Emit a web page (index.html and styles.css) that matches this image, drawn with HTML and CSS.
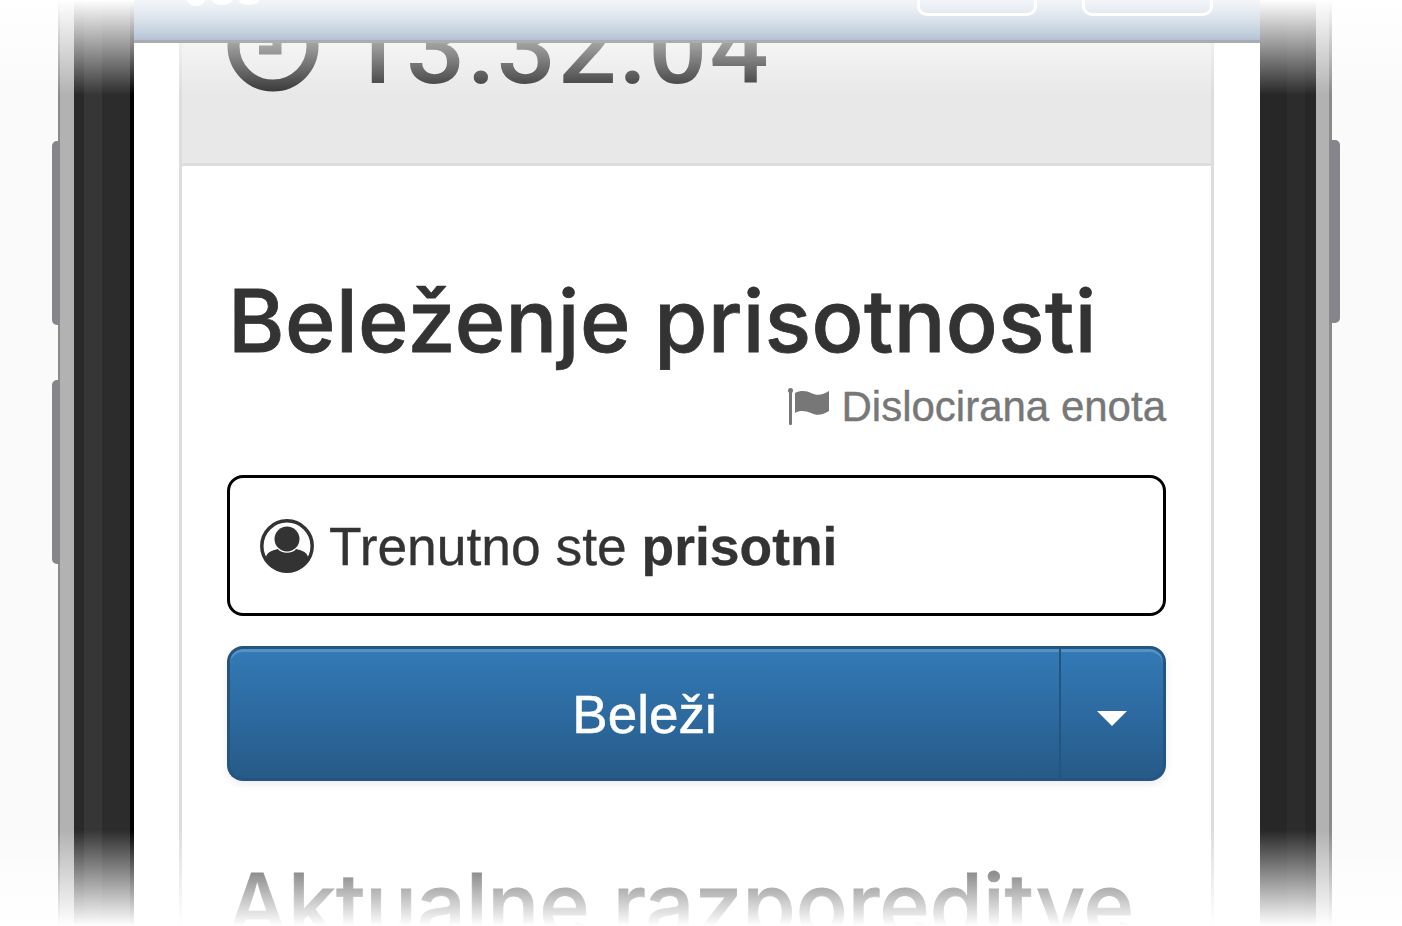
FILE: index.html
```html
<!DOCTYPE html>
<html>
<head>
  <meta name="viewport" content="width=device-width, initial-scale=1.0">
  <link rel="stylesheet" href="styles.css">
</head>
<body>
  <div class="stage">
    <!-- Phone side buttons -->
    <span class="side-key key-left-1"></span>
    <span class="side-key key-left-2"></span>
    <span class="side-key key-right"></span>

    <div class="phone">
      <div class="bezel bezel-left"><i></i><i></i><i></i><i></i><i></i></div>

      <div class="screen">
        <div class="navbar">
          <svg class="brand" width="90" height="8" viewBox="0 0 90 8">
            <ellipse cx="11" cy="0" rx="9" ry="6"></ellipse>
            <ellipse cx="37" cy="0" rx="10" ry="5"></ellipse>
            <ellipse cx="64" cy="0" rx="10" ry="5"></ellipse>
          </svg>
          <span class="nav-btn nav-btn-a"></span>
          <span class="nav-btn nav-btn-b"></span>
        </div>

        <div class="panel">
          <div class="clock-bar">
            <svg class="clock-icon" width="92" height="92" viewBox="0 0 92 92">
              <circle cx="46" cy="46" r="39.5"></circle>
              <path d="M32 50 H50 V24"></path>
            </svg>
            <span class="clock-time">13:32:04</span>
          </div>

          <div class="panel-body">
            <h1 class="title">Beleženje prisotnosti</h1>
            <div class="location">
              <svg width="42" height="38" viewBox="0 0 42 38">
                <rect x="1" y="4" width="3" height="34" rx="1"></rect>
                <circle cx="2.5" cy="3.5" r="2.5"></circle>
                <path d="M7 6 C13 3 19 4 23 6 C29 9 35 8 41 4 V24 C35 28 29 29 23 26 C18 24 12 23 7 26 Z"></path>
              </svg>
              <span>Dislocirana enota</span>
            </div>

            <div class="status">
              <svg width="54" height="54" viewBox="0 0 54 54">
                <circle class="ring" cx="27" cy="27" r="25.2"></circle>
                <circle cx="27" cy="20" r="12.5"></circle>
                <path d="M6 43 V38 C7 33 13 31 18 30 C21 35 33 35 36 30 C41 31 47 33 48 38 V43 A26 26 0 0 1 6 43 Z"></path>
              </svg>
              <span>Trenutno ste <b>prisotni</b></span>
            </div>

            <div class="action">
              <button class="action-main">Beleži</button>
              <button class="action-caret"><i></i></button>
            </div>

            <h2 class="subtitle">Aktualne razporeditve</h2>
          </div>
        </div>
      </div>

      <div class="bezel bezel-right"><i></i><i></i><i></i><i></i></div>
    </div>

    <!-- Fade at top and bottom -->
    <div class="fade fade-top"></div>
    <div class="fade fade-bottom"></div>
    <div class="nav-top"></div>
  </div>
</body>
</html>
```

FILE: styles.css
```css
body {
  margin: 0;
  background: #fff;
  font-family: "Liberation Sans", Arial, sans-serif;
  color: #333;
}

.stage {
  position: relative;
  width: 1402px;
  height: 926px;
  overflow: hidden;
  background: #fafafa;
}

.side-key {
  position: absolute;
  background: #85858b;
  border-radius: 5px 0 0 5px;
}

.key-left-1 {
  left: 52px;
  top: 141px;
  width: 8px;
  height: 184px;
}

.key-left-2 {
  left: 52px;
  top: 380px;
  width: 8px;
  height: 184px;
}

.key-right {
  left: 1330px;
  top: 140px;
  width: 10px;
  height: 183px;
  border-radius: 0 5px 5px 0;
}

.phone {
  display: flex;
  height: 926px;
  padding-left: 58px;
}

.bezel {
  display: flex;
  flex: none;
}

.bezel i {
  display: block;
  height: 100%;
}

.bezel-left i:nth-child(1) { width: 2px; background: #8a8a8a; }
.bezel-left i:nth-child(2) { width: 14px; background: #b2b2b2; }
.bezel-left i:nth-child(3) { width: 10px; background: #2a2a2a; }
.bezel-left i:nth-child(4) { width: 18px; background: #363636; }
.bezel-left i:nth-child(5) { width: 32px; background: linear-gradient(90deg, #2c2c2c 28px, #000 28px); }

.bezel-right i:nth-child(1) { width: 56px; background: linear-gradient(90deg, #272727 27px, #2c2c2c 27px, #2c2c2c 45px, #272727 45px); }
.bezel-right i:nth-child(2) { width: 13px; background: #b2b2b2; }
.bezel-right i:nth-child(3) { width: 3px; background: #8a8a8a; }
.bezel-right i:nth-child(4) { width: 0; }

.screen {
  position: relative;
  flex: none;
  width: 1126px;
  background: #fff;
  padding: 0 46px 0 45px;
  box-sizing: border-box;
}

.navbar {
  position: absolute;
  z-index: 5;
  top: 0;
  left: 0;
  right: 0;
  height: 40px;
  border-bottom: 3px solid #a9acb0;
  background: linear-gradient(#dfe7ef, #b3c3d4);
}

.brand {
  position: absolute;
  left: 51px;
  top: 0;
  fill: #fff;
}

.nav-btn {
  position: absolute;
  top: -20px;
  height: 30px;
  border: 3px solid #fff;
  border-radius: 10px;
}

.nav-btn-a {
  left: 783px;
  width: 114px;
}

.nav-btn-b {
  left: 948px;
  width: 125px;
}

.panel {
  height: 100%;
  border-left: 3px solid #ddd;
  border-right: 3px solid #ddd;
}

.clock-bar {
  display: flex;
  align-items: flex-end;
  gap: 38px;
  height: 166px;
  padding: 0 45px 71px;
  box-sizing: border-box;
  overflow: hidden;
  background: #e8e8e8;
  border-bottom: 3px solid #ddd;
}

.clock-icon {
  flex: none;
}

.clock-icon circle,
.clock-icon path {
  fill: none;
  stroke: #333;
  stroke-width: 12px;
}

.clock-icon path {
  stroke-width: 9px;
  stroke: #444;
}

.clock-time {
  flex: none;
  margin-bottom: -8px;
  margin-left: -12px;
  font-family: Roboto, "Liberation Sans", sans-serif;
  font-size: 104px;
  font-weight: 500;
  line-height: 1;
  letter-spacing: 2px;
}

.panel-body {
  padding: 0 45px;
}

.title {
  margin: 0 0 0 1px;
  padding-top: 110px;
  font-family: Inter, "Liberation Sans", sans-serif;
  font-size: 86px;
  font-weight: 500;
  line-height: 90px;
  letter-spacing: 0.45px;
  white-space: nowrap;
  -webkit-text-stroke: 0.8px #333;
}

.location {
  display: flex;
  justify-content: flex-end;
  align-items: center;
  gap: 11px;
  margin-top: 15px;
  font-size: 42px;
  line-height: 48px;
  color: #777;
  -webkit-text-stroke: 0.4px #777;
}

.location span {
  padding-top: 2px;
}

.location svg {
  fill: #777;
}

.status {
  display: flex;
  align-items: center;
  gap: 15px;
  height: 141px;
  box-sizing: border-box;
  margin-top: 44px;
  padding-left: 30px;
  border: 3px solid #000;
  border-radius: 16px;
  font-size: 53.4px;
  -webkit-text-stroke: 0.3px #333;
}

.status span {
  padding-top: 2px;
}

.status svg {
  fill: #333;
}

.status .ring {
  fill: none;
  stroke: #333;
  stroke-width: 3.5px;
}

.action {
  display: flex;
  height: 135px;
  margin-top: 30px;
  border-radius: 16px;
  box-shadow: 0 3px 8px rgba(0, 0, 0, 0.08);
}

.action button {
  border: 3px solid #245580;
  background: linear-gradient(#337ab7, #265a88);
  box-shadow: inset 0 3px 0 rgba(255, 255, 255, 0.18);
  color: #fff;
  font-family: inherit;
}

.action-main {
  flex: 1;
  padding: 2px 0 0;
  border-right-width: 0 !important;
  border-radius: 16px 0 0 16px;
  font-size: 53px;
  -webkit-text-stroke: 0.5px #fff;
}

.action-caret {
  display: flex;
  align-items: center;
  justify-content: center;
  flex: none;
  width: 107px;
  border-left-width: 2px !important;
  border-radius: 0 16px 16px 0;
}

.action-caret i {
  display: block;
  margin-top: 10px;
  border-top: 15px solid #fff;
  border-left: 15px solid transparent;
  border-right: 15px solid transparent;
}

.subtitle {
  margin: 79px 0 0;
  font-family: Inter, "Liberation Sans", sans-serif;
  font-size: 86px;
  font-weight: 500;
  line-height: 90px;
  white-space: nowrap;
  -webkit-text-stroke: 0.8px #333;
}

.fade {
  position: absolute;
  z-index: 3;
  left: 0;
  right: 0;
}

.fade-top {
  top: 0;
  height: 95px;
  background: linear-gradient(#fff, rgba(255, 255, 255, 0));
}

.fade-bottom {
  bottom: 0;
  height: 96px;
  background: linear-gradient(rgba(255, 255, 255, 0), #fff);
}

.nav-top {
  position: absolute;
  z-index: 6;
  top: 0;
  left: 134px;
  width: 1126px;
  height: 40px;
  background: linear-gradient(rgba(255, 255, 255, 0.6), rgba(255, 255, 255, 0));
}
```
